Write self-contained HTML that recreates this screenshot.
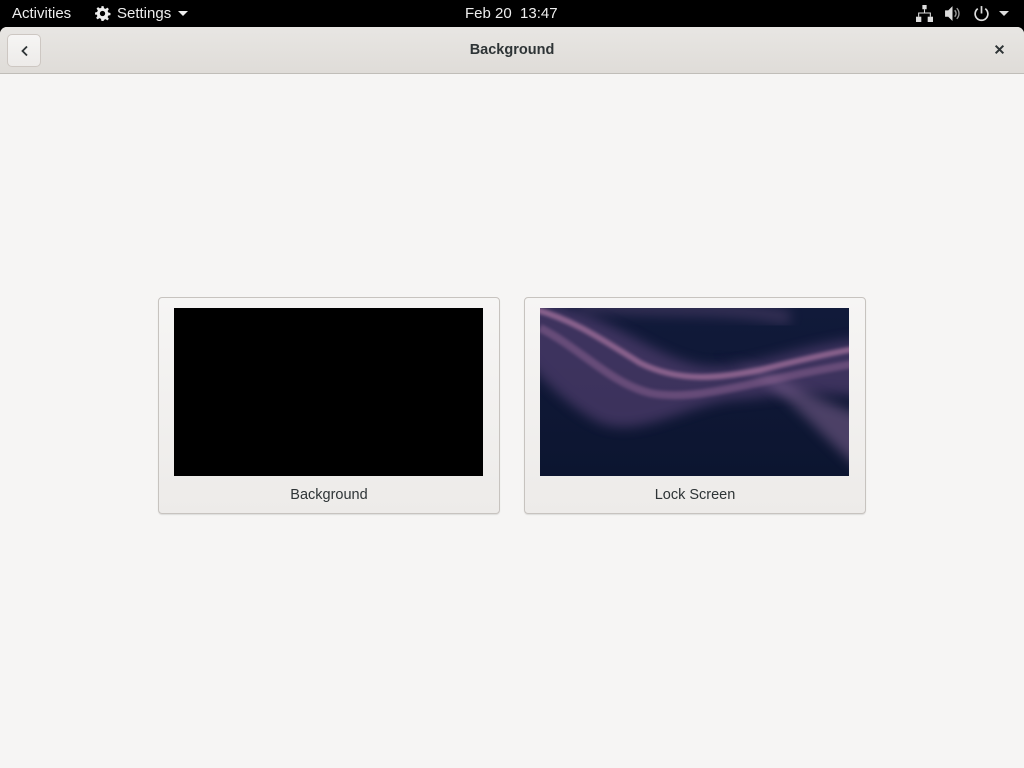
<!DOCTYPE html>
<html><head><style>
*{margin:0;padding:0;box-sizing:border-box}
body{width:1024px;height:768px;background:#000;font-family:"Liberation Sans","DejaVu Sans",sans-serif;overflow:hidden;position:relative}
.top{position:absolute;left:0;top:0;width:1024px;height:27px;background:#000;color:#eee;font-size:15px}
.top span{position:absolute;top:5px}
.win{position:absolute;left:0;top:27px;width:1024px;height:741px;background:#f6f5f4;border-radius:7px 7px 0 0;overflow:hidden}
.hdr{height:47px;background:linear-gradient(#e8e6e3,#dfdcd8);border-bottom:1px solid #c0bdb8;position:relative}
.title{position:absolute;left:0;right:0;top:15px;text-align:center;font-size:14.5px;font-weight:bold;color:#2e3436}
.back{position:absolute;left:7px;top:7px;width:34px;height:33px;border:1px solid #cdc7c2;border-radius:5px;background:linear-gradient(#f6f5f4,#edebe9)}
.card{position:absolute;top:270px;width:342px;height:217px;border:1px solid #c7c3bf;border-radius:4px;background:linear-gradient(#f6f5f4,#edebe9);box-shadow:0 1px 1px rgba(0,0,0,.1)}
.img{position:absolute;left:15px;top:10px;width:309px;height:168px;overflow:hidden}
.lbl{position:absolute;left:0;right:0;top:189px;text-align:center;font-size:14.5px;color:#2e3436}
</style></head><body>
<div class="top">
<span style="left:12px">Activities</span>
<svg style="position:absolute;left:94px;top:5px" width="17" height="17" viewBox="0 0 16 16"><path fill="#eee" d="M7 1h2l.4 2 1.5.7 1.7-1.2 1.4 1.4-1.2 1.7.7 1.5 2 .4v2l-2 .4-.7 1.5 1.2 1.7-1.4 1.4-1.7-1.2-1.5.7L9 15H7l-.4-2-1.5-.7-1.7 1.2-1.4-1.4 1.2-1.7L2.5 9 1 9V7l1.9-.4.7-1.5-1.2-1.7 1.4-1.4 1.7 1.2 1.5-.7z"/><circle cx="8" cy="8" r="2.5" fill="#000"/></svg>
<span style="left:117px">Settings</span>
<svg style="position:absolute;left:178px;top:11px" width="10" height="6"><path d="M0 0h10L5 5z" fill="#eee"/></svg>
<span style="left:465px">Feb 20&nbsp; 13:47</span>
<svg style="position:absolute;left:916px;top:5px" width="17" height="17" viewBox="0 0 16 16" fill="#ddd"><rect x="6" y="0" width="4" height="4"/><rect x="0" y="11" width="5" height="5"/><rect x="11" y="11" width="5" height="5"/><path d="M7.5 4h1v3h5.5v4h-1V8H3v3H2V7h5.5z"/></svg>
<svg style="position:absolute;left:944px;top:5px" width="17" height="17" viewBox="0 0 16 16"><path d="M1 5h3l4-4v14l-4-4H1z" fill="#ddd"/><path d="M10 5a4 4 0 0 1 0 6M12 3a7 7 0 0 1 0 10" stroke="#999" stroke-width="1.3" fill="none"/></svg>
<svg style="position:absolute;left:973px;top:5px" width="17" height="17" viewBox="0 0 16 16"><path d="M4.5 3.5a6 6 0 1 0 7 0" stroke="#ddd" stroke-width="1.6" fill="none"/><path d="M8 1v7" stroke="#ddd" stroke-width="1.6"/></svg>
<svg style="position:absolute;left:999px;top:11px" width="10" height="6"><path d="M0 0h10L5 5z" fill="#ddd"/></svg>
</div>
<div class="win">
<div class="hdr">
<div class="back"><svg style="position:absolute;left:11px;top:10px" width="12" height="12" viewBox="0 0 12 12"><path d="M8 1.5L3.5 6 8 10.5" stroke="#2e3436" stroke-width="1.8" fill="none"/></svg></div>
<div class="title">Background</div>
<svg style="position:absolute;left:994px;top:17px" width="11" height="11" viewBox="0 0 10 10"><path d="M1.5 1.5l7 7M8.5 1.5l-7 7" stroke="#2e3436" stroke-width="1.8"/></svg>
</div>
<div class="card" style="left:158px"><div class="img" style="background:#000"></div><div class="lbl">Background</div></div>
<div class="card" style="left:524px"><div class="img">
<svg width="309" height="168" viewBox="0 0 309 168">
<defs><linearGradient id="bg" x1="0" y1="0" x2="0" y2="1"><stop offset="0" stop-color="#111a3a"/><stop offset="1" stop-color="#0c1530"/></linearGradient>
<filter id="b" x="-50%" y="-50%" width="200%" height="200%"><feGaussianBlur stdDeviation="6"/></filter><filter id="b2" x="-50%" y="-50%" width="200%" height="200%"><feGaussianBlur stdDeviation="1.5"/></filter></defs>
<rect width="309" height="168" fill="url(#bg)"/>
<path d="M-20 -10 C60 0 100 40 150 55 C200 70 250 35 330 30 L330 90 C260 80 230 90 190 92 C140 100 100 130 60 115 C30 100 0 70 -20 45Z" fill="#5c4478" opacity=".6" filter="url(#b)"/>
<path d="M170 45 C230 60 270 120 330 170 L330 110 C270 90 220 60 170 45Z" fill="#8a6a9a" opacity=".5" filter="url(#b)"/>
<path d="M-10 0 C30 10 60 30 100 55 C140 75 180 70 220 62 C260 52 290 45 320 40" stroke="#b27aa5" stroke-width="6" fill="none" opacity=".65" filter="url(#b2)"/>
<path d="M0 20 C40 40 70 75 110 85 C160 95 220 70 320 55" stroke="#9a6a9a" stroke-width="8" fill="none" opacity=".45" filter="url(#b2)"/>
<path d="M40 -5 C120 5 180 -5 250 10" stroke="#7a5a8a" stroke-width="14" fill="none" opacity=".35" filter="url(#b)"/>
</svg></div><div class="lbl">Lock Screen</div></div>
</div>
</body></html>
